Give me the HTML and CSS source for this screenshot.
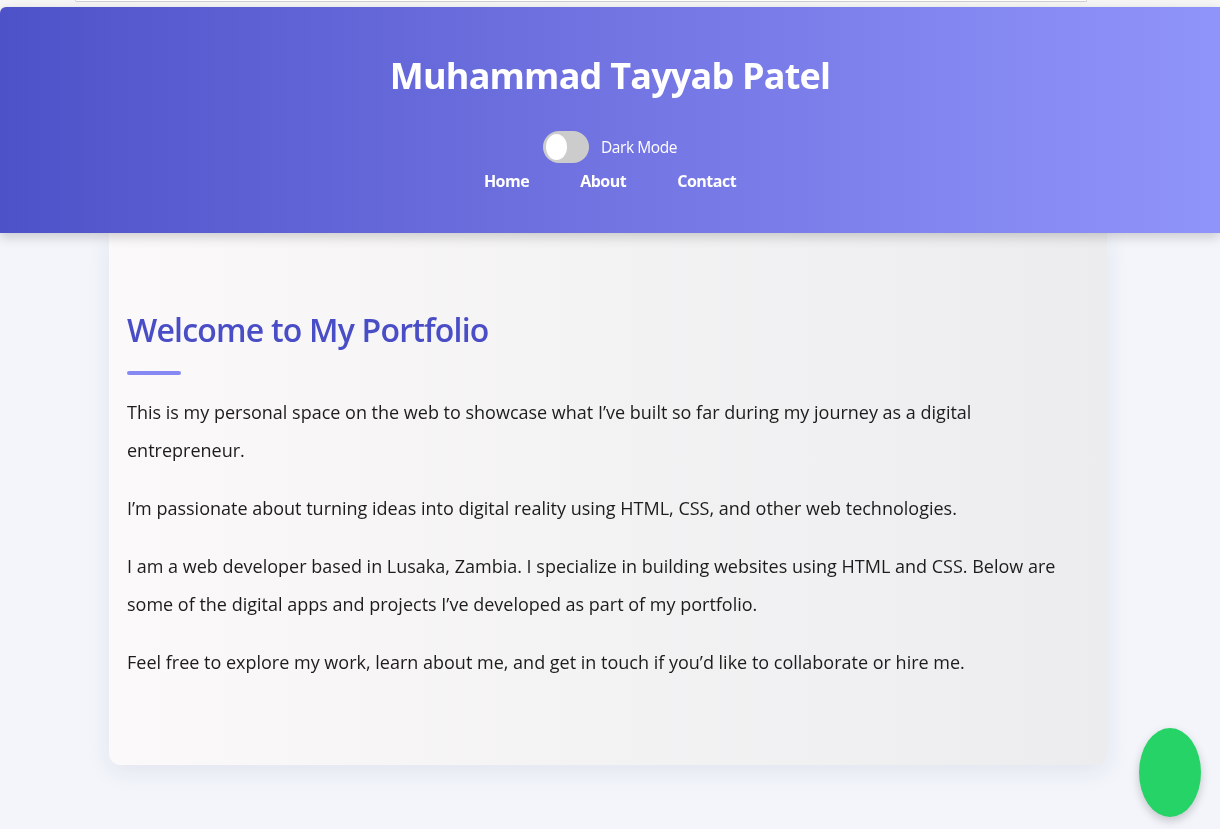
FILE: index.html
```html
<!DOCTYPE html>
<html lang="en">
<head>
<meta charset="utf-8">
<title>Muhammad Tayyab Patel</title>
<link rel="stylesheet" href="styles.css">
</head>
<body>
<div class="topstrip"><div class="topfield"></div></div>
<header class="site-header">
  <h1 class="site-title">Muhammad Tayyab Patel</h1>
  <div class="mode-row">
    <span class="toggle"><span class="knob"></span></span>
    <span class="mode-label">Dark Mode</span>
  </div>
  <nav class="nav">
    <a href="#">Home</a>
    <a href="#">About</a>
    <a href="#">Contact</a>
  </nav>
</header>
<main class="card">
  <h2 class="card-title">Welcome to My Portfolio</h2>
  <div class="title-bar"></div>
  <p>This is my personal space on the web to showcase what I’ve built so far during my journey as a digital entrepreneur.</p>
  <p>I’m passionate about turning ideas into digital reality using HTML, CSS, and other web technologies.</p>
  <p>I am a web developer based in Lusaka, Zambia. I specialize in building websites using HTML and CSS. Below are some of the digital apps and projects I’ve developed as part of my portfolio.</p>
  <p>Feel free to explore my work, learn about me, and get in touch if you’d like to collaborate or hire me.</p>
</main>
<a class="chat-btn" href="#" aria-label="Chat"></a>
</body>
</html>
```
FILE: styles.css
```css
html, body {
  margin: 0;
  padding: 0;
}
body {
  background: #f3f5fb;
  font-family: "Open Sans", "Liberation Sans", sans-serif;
  color: #1c1c1c;
  height: 829px;
  overflow: hidden;
}
.topstrip {
  height: 7px;
  background: #f6f6f6;
}
.topfield {
  margin-left: 75px;
  width: 1010px;
  height: 1px;
  border: 1px solid #cfcfcf;
  border-top: none;
  border-radius: 0 0 4px 4px;
  background: #fff;
}
.site-header {
  height: 226px;
  box-sizing: border-box;
  padding-top: 44px;
  background: linear-gradient(90deg, #4e52c8 0%, #7274e2 50%, #8f94fa 100%);
  border-top-left-radius: 6px;
  box-shadow: 0 4px 12px rgba(0, 0, 0, 0.18);
  color: #fff;
  text-align: center;
  position: relative;
  z-index: 2;
}
.site-title {
  margin: 0;
  font-size: 36px;
  line-height: 50px;
  font-weight: 700;
  letter-spacing: -0.8px;
}
.mode-row {
  margin-top: 30px;
  display: flex;
  justify-content: center;
  align-items: center;
  gap: 12px;
}
.toggle {
  width: 46px;
  height: 32px;
  border-radius: 16px;
  background: #cccccc;
  display: flex;
  align-items: center;
  padding-left: 3px;
  box-sizing: border-box;
}
.knob {
  width: 21px;
  height: 26px;
  border-radius: 50%;
  background: #fff;
}
.mode-label {
  font-size: 15.5px;
  letter-spacing: -0.4px;
}
.nav {
  margin-top: 6px;
  display: flex;
  justify-content: center;
  gap: 51px;
}
.nav a {
  color: #fff;
  text-decoration: none;
  font-weight: 700;
  font-size: 16px;
  letter-spacing: -0.5px;
  line-height: 24px;
}
.card {
  display: block;
  margin-left: 109px;
  width: 998px;
  height: 532px;
  box-sizing: border-box;
  padding: 69px 18px 0 18px;
  background: linear-gradient(90deg, #fbf9f9 0%, #ececee 100%);
  border-radius: 0 0 12px 12px;
  box-shadow: 0 6px 24px rgba(40, 40, 90, 0.08);
  position: relative;
  z-index: 1;
}
.card-title {
  margin: 0;
  font-size: 32px;
  line-height: 56px;
  font-weight: 600;
  letter-spacing: -0.8px;
  color: #4a4ec6;
}
.title-bar {
  margin-top: 13px;
  width: 54px;
  height: 4px;
  border-radius: 2px;
  background: #8689f4;
}
.card p {
  margin: 18px 0 20px;
  font-size: 18px;
  line-height: 38px;
}
.card p + p {
  margin-top: 0;
}
.chat-btn {
  position: fixed;
  right: 19px;
  bottom: 12px;
  width: 62px;
  height: 89px;
  border-radius: 50%;
  background: #25d366;
  box-shadow: 0 4px 10px rgba(0, 0, 0, 0.2);
}
```
